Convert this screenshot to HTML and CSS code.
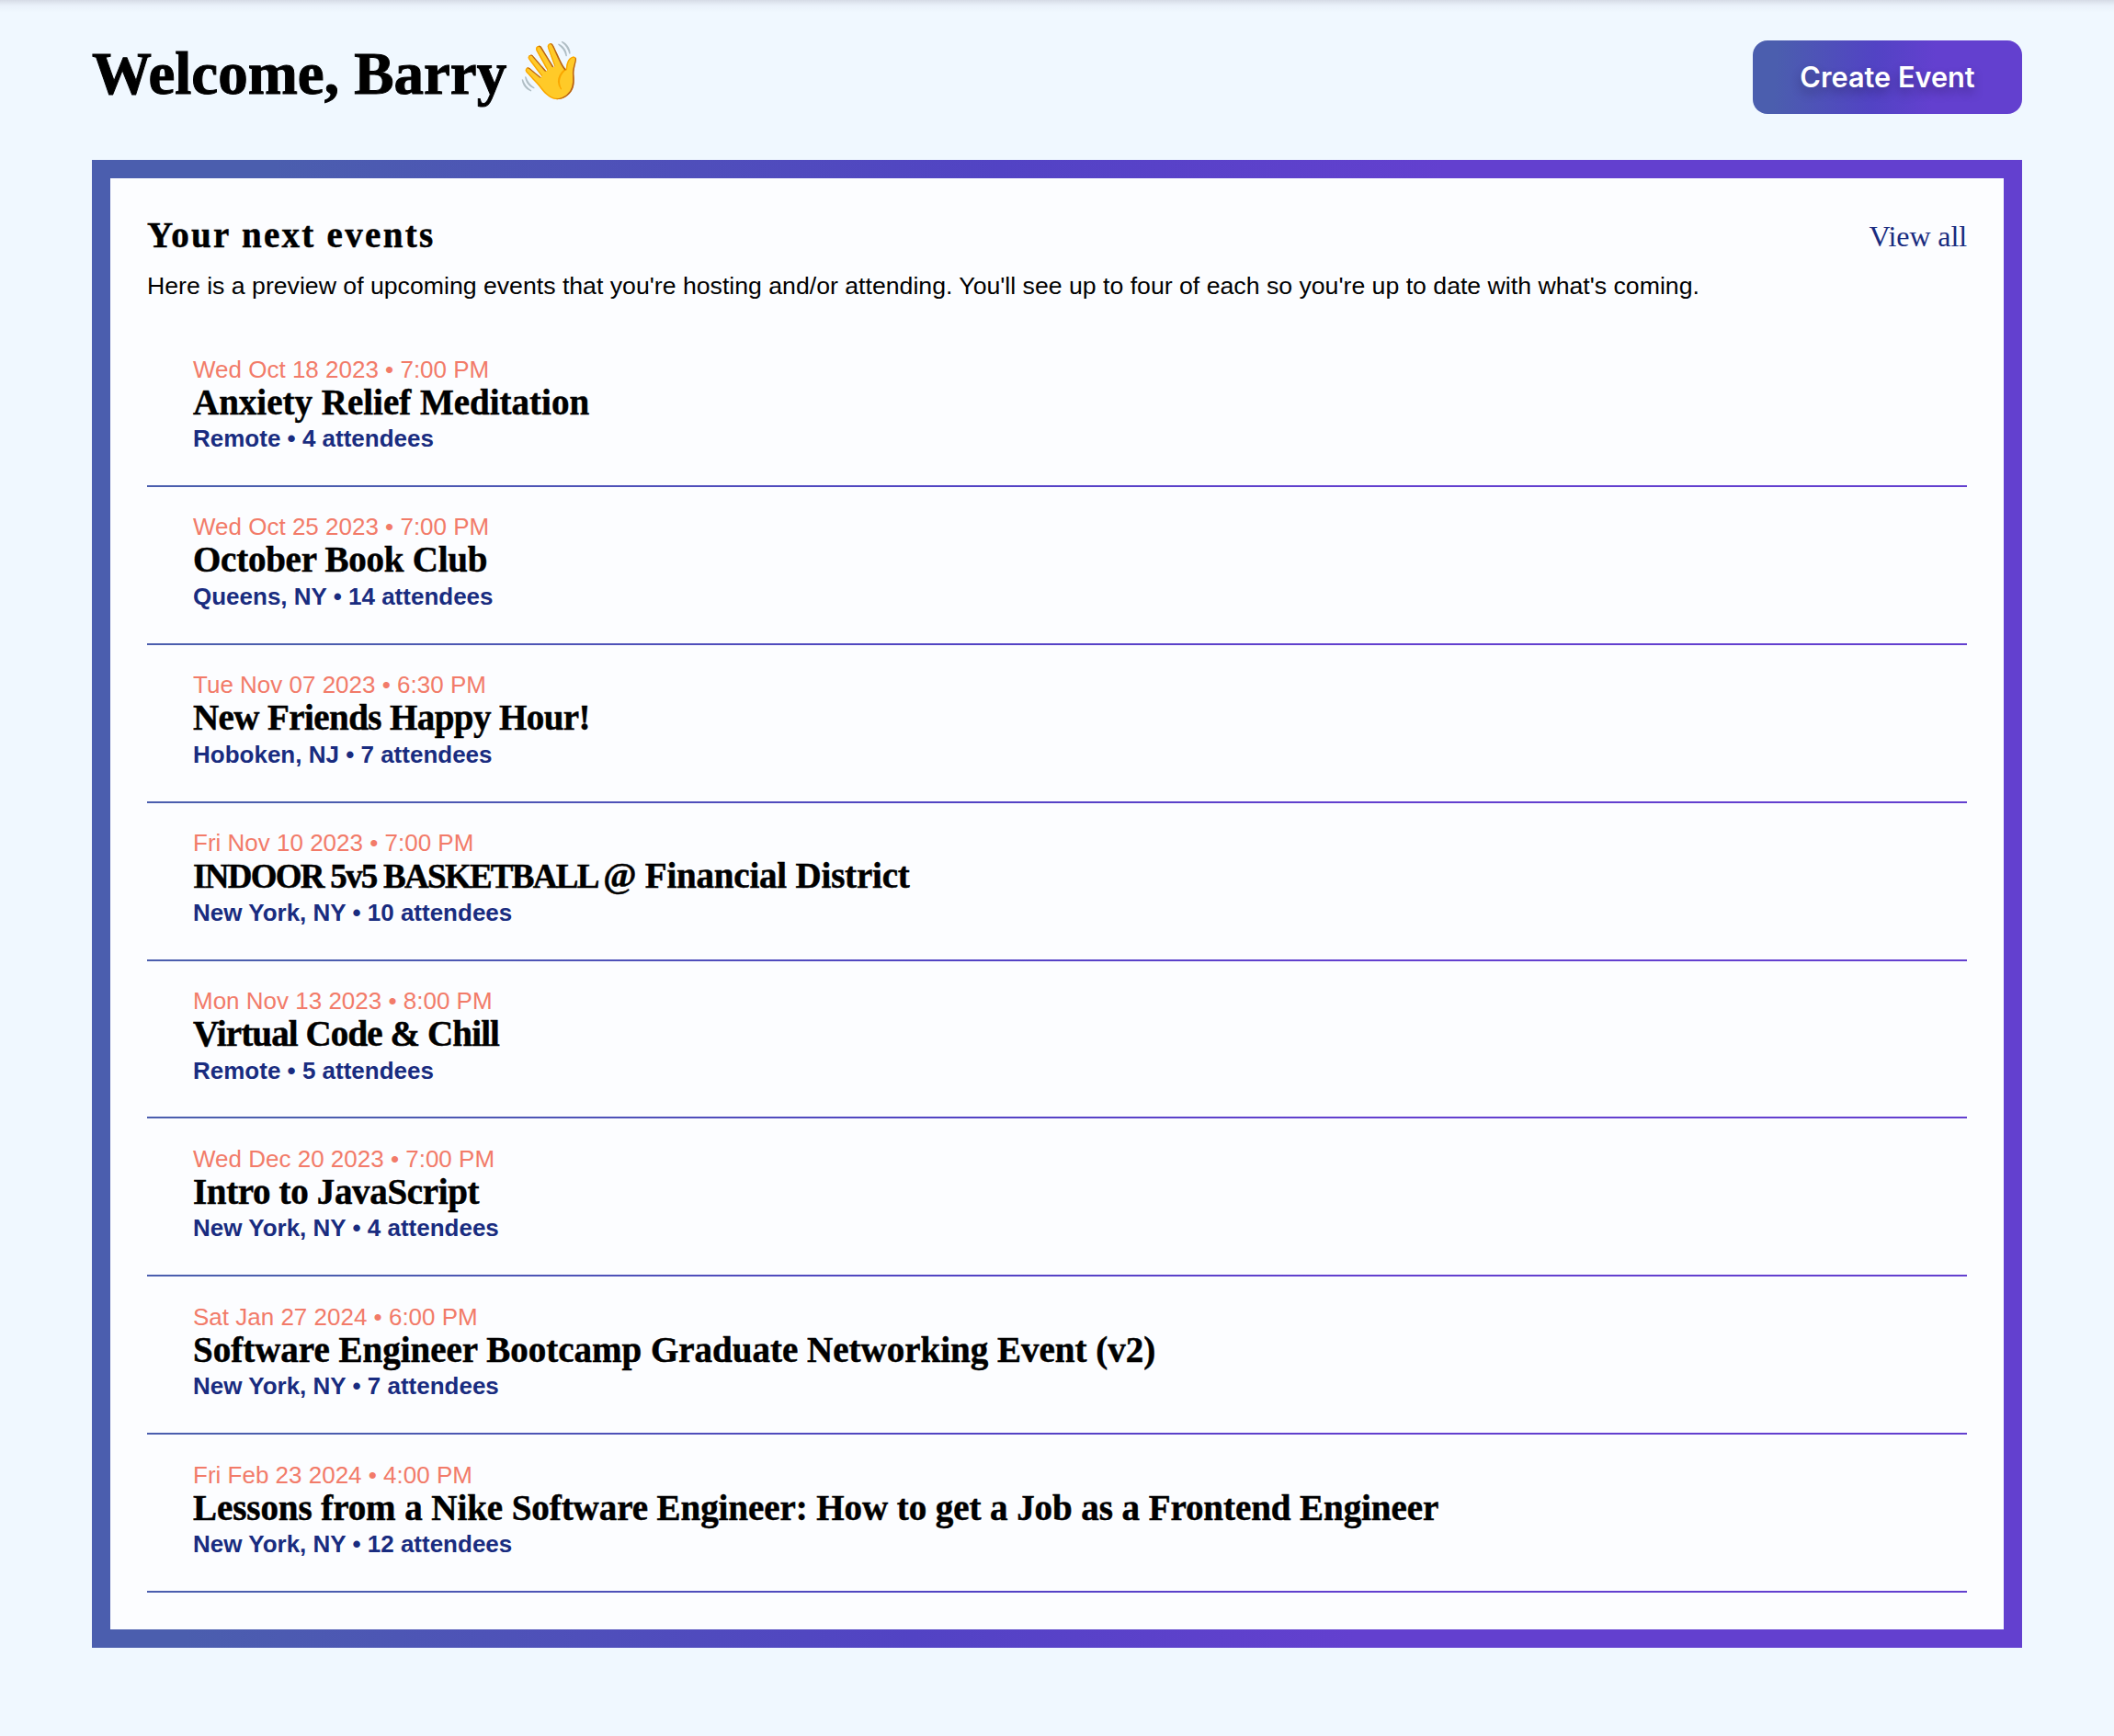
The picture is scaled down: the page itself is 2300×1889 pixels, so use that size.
FILE: index.html
```html
<!DOCTYPE html>
<html lang="en">
<head>
<meta charset="utf-8">
<title>Your events</title>
<link rel="stylesheet" href="styles.css">
</head>
<body>
<main class="page">
  <header class="welcome">
    <h1 class="welcome-title">Welcome, Barry<span class="wave">👋</span></h1>
    <button class="create-button" type="button">Create Event</button>
  </header>
  <section class="card">
    <div class="card-head">
      <h2 class="card-title">Your next events</h2>
      <a class="view-all">View all</a>
    </div>
    <p class="card-text">Here is a preview of upcoming events that you're hosting and/or attending. You'll see up to four of each so you're up to date with what's coming.</p>
    <ul class="events">
      <li class="event"><p class="date">Wed Oct 18 2023 • 7:00 PM</p><h3 class="name">Anxiety Relief Meditation</h3><p class="meta">Remote • 4 attendees</p></li>
      <li class="event"><p class="date">Wed Oct 25 2023 • 7:00 PM</p><h3 class="name">October Book Club</h3><p class="meta">Queens, NY • 14 attendees</p></li>
      <li class="event"><p class="date">Tue Nov 07 2023 • 6:30 PM</p><h3 class="name">New Friends Happy Hour!</h3><p class="meta">Hoboken, NJ • 7 attendees</p></li>
      <li class="event"><p class="date">Fri Nov 10 2023 • 7:00 PM</p><h3 class="name"><span class="caps">INDOOR 5v5 BASKETBALL </span>@ Financial District</h3><p class="meta">New York, NY • 10 attendees</p></li>
      <li class="event"><p class="date">Mon Nov 13 2023 • 8:00 PM</p><h3 class="name">Virtual Code &amp; Chill</h3><p class="meta">Remote • 5 attendees</p></li>
      <li class="event"><p class="date">Wed Dec 20 2023 • 7:00 PM</p><h3 class="name">Intro to JavaScript</h3><p class="meta">New York, NY • 4 attendees</p></li>
      <li class="event"><p class="date">Sat Jan 27 2024 • 6:00 PM</p><h3 class="name">Software Engineer Bootcamp Graduate Networking Event (v2)</h3><p class="meta">New York, NY • 7 attendees</p></li>
      <li class="event"><p class="date">Fri Feb 23 2024 • 4:00 PM</p><h3 class="name">Lessons from a Nike Software Engineer: How to get a Job as a Frontend Engineer</h3><p class="meta">New York, NY • 12 attendees</p></li>
    </ul>
  </section>
</main>
</body>
</html>
```
FILE: styles.css
```css
:root {
  --brand: linear-gradient(93.5deg, #4b5eae 9%, #5243c4 45%, #6340cf 67%);
  --navy: #192c80;
  --coral: #f27b69;
  --serif: "Liberation Serif", serif;
  --sans: "Liberation Sans", sans-serif;
}

* {
  box-sizing: border-box;
  margin: 0;
  padding: 0;
}

body {
  background: #f0f8ff;
  color: #000;
  font-family: var(--sans);
}

.page {
  min-height: 1889px;
  padding: 44px 100px 96px;
  background: linear-gradient(rgba(40, 25, 60, 0.13), rgba(40, 25, 90, 0.03) 6px, transparent 14px) no-repeat;
}

.welcome {
  display: flex;
  justify-content: space-between;
  align-items: flex-start;
  margin-bottom: 50px;
}

.welcome-title {
  display: flex;
  font: bold 65px/72px var(--serif);
  -webkit-text-stroke: 1px #000;
}

.wave {
  margin-left: 10px;
  font-size: 61px;
  line-height: 68px;
  -webkit-text-stroke: 0;
}

.create-button {
  width: 293px;
  height: 80px;
  border: 0;
  border-radius: 16px;
  background: var(--brand);
  color: #fff;
  font: 600 30.7px/80px Inter, sans-serif;
  text-shadow: 0 6px 12px rgba(0, 0, 0, 0.3);
}

.card {
  height: 1619px;
  padding: 38px 40px 40px;
  border: 20px solid transparent;
  background:
    linear-gradient(#fcfdff, #fcfdff) padding-box,
    var(--brand) border-box;
}

.card-head {
  display: flex;
  justify-content: space-between;
  align-items: flex-start;
  height: 48px;
}

.card-title {
  font: bold 39px/48px var(--serif);
  letter-spacing: 2.3px;
  -webkit-text-stroke: 0.5px #000;
}

.view-all {
  color: var(--navy);
  font: 32px/51px var(--serif);
  letter-spacing: -0.1px;
}

.card-text {
  margin-top: 15px;
  font-size: 26.66px;
  line-height: 32px;
}

.events {
  margin-top: 31.14px;
  list-style: none;
}

.event {
  height: 171.86px;
  padding: 28.5px 50px 0;
  background: var(--brand) bottom / 100% 2px no-repeat;
}

.date {
  color: var(--coral);
  font-size: 26px;
  line-height: 31px;
}

.name {
  height: 41px;
  font: bold 39px/40px var(--serif);
  -webkit-text-stroke: 0.5px #000;
}

.caps {
  font-size: 37px;
  white-space: pre;
}

.meta {
  margin-top: 2.5px;
  color: var(--navy);
  font-size: 26px;
  font-weight: bold;
  line-height: 32px;
}

.event:nth-child(2) .name { letter-spacing: -0.24px; }
.event:nth-child(3) .name { letter-spacing: -0.58px; }
.event:nth-child(4) .name { letter-spacing: -0.2px; }
.event:nth-child(4) .caps { letter-spacing: -1.73px; }
.event:nth-child(5) .name { letter-spacing: -0.88px; }
.event:nth-child(6) .name { letter-spacing: -0.35px; }
.event:nth-child(8) .name { letter-spacing: -0.07px; }
```
